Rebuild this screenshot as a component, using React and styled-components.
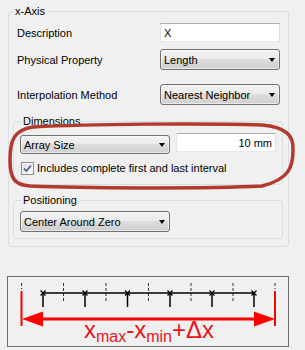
import styled, { createGlobalStyle } from "styled-components";

const GlobalStyle = createGlobalStyle`
  html, body {
    margin: 0;
    padding: 0;
    background: #f0f0f0;
  }
  body {
    font-family: "Liberation Sans", Arial, sans-serif;
    font-size: 11px;
    color: #000;
  }
`;

const Page = styled.div`
  position: relative;
  width: 305px;
  height: 350px;
  box-sizing: border-box;
  padding: 4px 0 0 8px;
  overflow: hidden;
`;

const GroupBox = styled.fieldset`
  box-sizing: border-box;
  width: ${(p) => (p.$width ? `${p.$width}px` : "auto")};
  min-width: 0;
  margin: ${(p) => p.$margin || "0"};
  padding: ${(p) => p.$padding};
  border: 1px solid #d5dfe5;
  border-radius: 3px;
`;

const Legend = styled.legend`
  padding: 0 1px;
  margin-left: ${(p) => p.$offset || 0}px;
  line-height: 14px;
`;

const FieldRow = styled.div`
  display: grid;
  grid-template-columns: 1fr 120px;
  align-items: center;
  padding: 0 3px 0 4px;
  margin-top: ${(p) => p.$mt || 0}px;
`;

const Label = styled.span`
  line-height: 14px;
`;

const TextBox = styled.div`
  box-sizing: border-box;
  width: ${(p) => (p.$w ? `${p.$w}px` : "100%")};
  height: 19px;
  background: #fff;
  border: 1px solid;
  border-color: #abadb3 #dbdfe6 #e3e9ef #e2e3ea;
  padding: 0 3px;
  display: flex;
  align-items: center;
  justify-content: ${(p) => (p.$right ? "flex-end" : "flex-start")};
`;

const Combo = styled.div`
  box-sizing: border-box;
  width: ${(p) => (p.$w ? `${p.$w}px` : "100%")};
  height: ${(p) => p.$h || 21}px;
  margin-top: ${(p) => p.$mt || 0}px;
  border: 1px solid #707070;
  border-radius: 3px;
  background: linear-gradient(#f2f2f2 0%, #ebebeb 45%, #dddddd 50%, #cfcfcf 100%);
  box-shadow: inset 0 0 0 1px rgba(255, 255, 255, 0.55);
  display: flex;
  align-items: center;
  justify-content: space-between;
  padding: 0 4px 0 3px;
`;

const Arrow = styled.span`
  width: 0;
  height: 0;
  border-left: 3.5px solid transparent;
  border-right: 3.5px solid transparent;
  border-top: 4px solid #000;
`;

const DimRow = styled.div`
  display: flex;
  align-items: flex-start;
  gap: 6px;
`;

const CheckRow = styled.label`
  display: flex;
  align-items: center;
  gap: 3px;
  margin: 7px 0 0 1px;
  line-height: 14px;
`;

const CheckBox = styled.span`
  box-sizing: border-box;
  width: 13px;
  height: 13px;
  border: 1px solid #8e8f8f;
  background: linear-gradient(135deg, #dcdcdc, #fefefe);
  box-shadow: inset 0 0 0 1px #f4f4f4;
  display: flex;
  align-items: center;
  justify-content: center;
`;

const Diagram = styled.div`
  box-sizing: border-box;
  width: 282px;
  height: 71px;
  margin: 29px 0 0 -1px;
  border: 1px solid #6d6d6d;
  svg {
    display: block;
  }
`;

const Annotation = styled.svg`
  position: absolute;
  left: 0;
  top: 0;
  pointer-events: none;
`;

function Select({ children, ...rest }) {
  return (
    <Combo {...rest}>
      <span>{children}</span>
      <Arrow />
    </Combo>
  );
}

const ticks = [21.5, 63.5, 106, 148.5, 191, 233, 275];
const marks = [43, 85, 127.5, 170, 212, 254];

function IntervalDrawing() {
  return (
    <svg width="280" height="69" viewBox="8 276 280 69">
      {ticks.map((x, i) => (
        <line
          key={x}
          x1={x}
          x2={x}
          y1={282}
          y2={i === 0 || i === ticks.length - 1 ? 288 : 302}
          stroke="#333"
          strokeWidth="1"
          strokeDasharray="3 2"
        />
      ))}
      <line x1="43" x2="254" y1="292" y2="292" stroke="#000" strokeWidth="1.5" />
      {marks.map((x) => (
        <g key={x} stroke="#000">
          <line x1={x} x2={x} y1="292" y2="306" strokeWidth="1.5" />
          <path d={`M${x - 2.5} ${289.5} L${x + 2.5} ${294.5} M${x + 2.5} ${289.5} L${x - 2.5} ${294.5}`} strokeWidth="1.2" />
        </g>
      ))}
      <line x1="21.5" x2="21.5" y1="290" y2="325" stroke="#f00" strokeWidth="2" />
      <line x1="275" x2="275" y1="290" y2="325" stroke="#f00" strokeWidth="2" />
      <line x1="40" x2="257" y1="318" y2="318" stroke="#f00" strokeWidth="3" />
      <polygon points="22,318 43,310.5 43,325.5" fill="#f00" />
      <polygon points="275,318 254,310.5 254,325.5" fill="#f00" />
      <text x="84" y="337" fontFamily="Liberation Sans, Arial, sans-serif" fontSize="24" fill="#e8141b">
        x<tspan fontSize="16" dy="4">max</tspan>
        <tspan dy="-4">-x</tspan>
        <tspan fontSize="16" dy="4">min</tspan>
        <tspan dy="-4">+Δx</tspan>
      </text>
    </svg>
  );
}

export default function App() {
  return (
    <>
      <GlobalStyle />
      <Page>
        <GroupBox $width={281} $padding="5px 5px 7px 4px">
          <Legend $offset={1}>x-Axis</Legend>

          <FieldRow>
            <Label>Description</Label>
            <TextBox>X</TextBox>
          </FieldRow>
          <FieldRow $mt={7}>
            <Label>Physical Property</Label>
            <Select>Length</Select>
          </FieldRow>
          <FieldRow $mt={14}>
            <Label>Interpolation Method</Label>
            <Select>Nearest Neighbor</Select>
          </FieldRow>

          <GroupBox $margin="9px 0 0" $padding="5px 6px 9px 6px">
            <Legend $offset={2}>Dimensions</Legend>
            <DimRow>
              <Select $w={150} $h={19} $mt={2}>
                Array Size
              </Select>
              <TextBox $w={100} $right>
                10 mm
              </TextBox>
            </DimRow>
            <CheckRow>
              <CheckBox>
                <svg width="9" height="9" viewBox="0 0 9 9">
                  <path d="M1 4.6 L3.4 7 L8 1.5" fill="none" stroke="#4a5f97" strokeWidth="1.8" />
                </svg>
              </CheckBox>
              Includes complete first and last interval
            </CheckRow>
          </GroupBox>

          <GroupBox $margin="8px 0 0" $padding="4px 6px 6px 6px">
            <Legend $offset={2}>Positioning</Legend>
            <Select $w={150}>Center Around Zero</Select>
          </GroupBox>
        </GroupBox>

        <Diagram>
          <IntervalDrawing />
        </Diagram>

        <Annotation width="305" height="350" viewBox="0 0 305 350">
          <path
            d="M33 127 C90 124 200 123 262 125 C285 127 294 135 293 150 C293 166 290 179 262 186 C200 189 80 188 30 186 C14 185 10 178 10 160 C10 140 14 130 33 127 Z"
            fill="none"
            stroke="#b3392c"
            strokeWidth="3.5"
          />
        </Annotation>
      </Page>
    </>
  );
}
